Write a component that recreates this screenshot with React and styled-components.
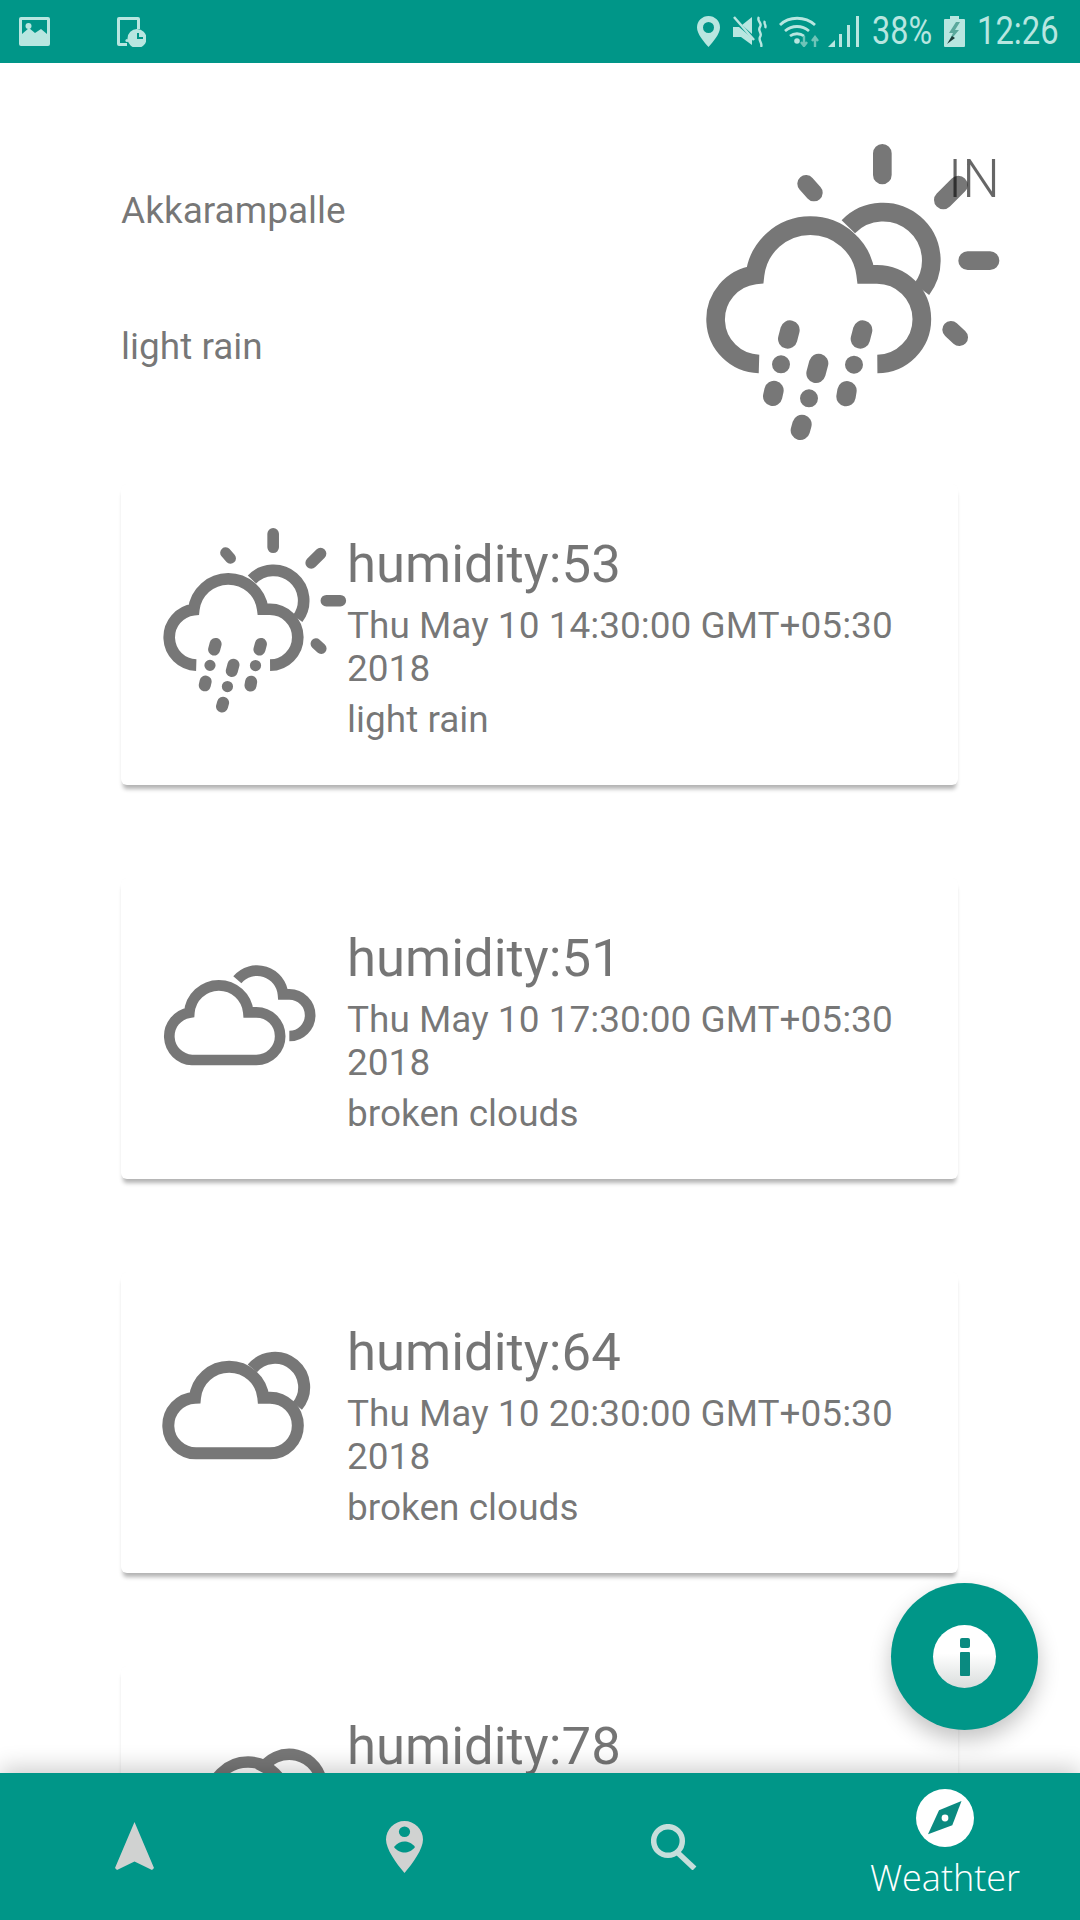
import React from "react";
import styled, { createGlobalStyle } from "styled-components";

const Global = createGlobalStyle`
  html, body { margin: 0; padding: 0; background: #fff; }
  body { font-family: Roboto, "Liberation Sans", sans-serif; }
  * { box-sizing: border-box; }
`;

const Screen = styled.div`
  position: relative;
  width: 1080px;
  height: 1920px;
  display: flex;
  flex-direction: column;
  overflow: hidden;
  background: #fff;
`;

const StatusBar = styled.div`
  height: 63px;
  flex: none;
  background: #009688;
  color: #b8e6e0;
  display: flex;
  align-items: center;
  justify-content: space-between;
  padding: 0 22px 0 19px;
`;

const StatusGroup = styled.div`
  display: flex;
  align-items: center;
  gap: ${(p) => p.$gap}px;
`;

const StatusGlyph = styled.svg`
  display: block;
  flex: none;
  fill: currentColor;
  margin-right: ${(p) => p.$mr || 0}px;
`;

const StatusText = styled.span`
  display: block;
  width: ${(p) => p.$w}px;
  font-size: 39px;
  line-height: 63px;
  white-space: nowrap;
  transform: scaleX(${(p) => p.$sx});
  transform-origin: left center;
`;

const Body = styled.main`
  flex: 1;
  min-height: 0;
  overflow: hidden;
  padding: 57px 122px 0 121px;
`;

const Header = styled.header`
  position: relative;
  height: 340px;
  margin-right: -62px;
  margin-bottom: 24px;
  display: flex;
  justify-content: space-between;
`;

const HeaderText = styled.div`
  display: flex;
  flex-direction: column;
  gap: 94px;
  padding-top: 70px;
  font-size: 37px;
  line-height: 42px;
  color: rgba(0, 0, 0, 0.54);
`;

const Country = styled.div`
  position: absolute;
  left: 827px;
  top: 28px;
  font-size: 53px;
  line-height: 62px;
  font-weight: 300;
  color: rgba(0, 0, 0, 0.6);
`;

const HeaderIcon = styled.div`
  width: 340px;
  height: 340px;
`;

const CardList = styled.div`
  display: flex;
  flex-direction: column;
  gap: 93px;
`;

const Card = styled.article`
  flex: none;
  height: 301px;
  display: flex;
  background: #fff;
  border-radius: 6px;
  padding: 29px 0 0 26px;
  box-shadow: 0 6px 4px -2px rgba(0, 0, 0, 0.3), 0 0 1px rgba(0, 0, 0, 0.02);
`;

const IconSlot = styled.div`
  flex: none;
  width: 200px;
  height: 212px;
`;

const WeatherSvg = styled.svg`
  display: block;
  width: ${(p) => p.$size}px;
  height: ${(p) => p.$size}px;
  overflow: visible;
  opacity: 0.53;
  fill: none;
  stroke: #000;
`;

const CardText = styled.div`
  flex: 1;
  min-width: 0;
  margin-top: 21px;
  color: rgba(0, 0, 0, 0.54);
`;

const Humidity = styled.div`
  font-size: 52.7px;
  line-height: 60px;
  margin-bottom: 10px;
`;

const DateLine = styled.div`
  font-size: 37px;
  line-height: 43px;
`;

const Description = styled.div`
  font-size: 37px;
  line-height: 43px;
  margin-top: 8px;
`;

const BottomNav = styled.nav`
  position: relative;
  z-index: 2;
  flex: none;
  height: 147px;
  background: #009688;
  display: grid;
  grid-template-columns: repeat(4, 1fr);
  box-shadow: 0 -5px 22px rgba(0, 0, 0, 0.2);
`;

const NavItem = styled.div`
  display: flex;
  flex-direction: column;
  align-items: center;
  justify-content: ${(p) => (p.$active ? "flex-start" : "center")};
  padding-top: ${(p) => (p.$active ? "16px" : "0")};
  padding-right: ${(p) => (p.$active ? "0" : "2px")};
`;

const NavLabel = styled.span`
  font-family: "Open Sans", sans-serif;
  font-weight: 300;
  font-size: 36px;
  line-height: 44px;
  margin-top: 9px;
  color: #fff;
`;

const Fab = styled.button`
  position: absolute;
  z-index: 3;
  right: 42px;
  bottom: 190px;
  width: 147px;
  height: 147px;
  padding: 0;
  border: 0;
  border-radius: 50%;
  background: #009688;
  display: flex;
  align-items: center;
  justify-content: center;
  box-shadow: 0 10px 22px rgba(0, 0, 0, 0.24);
`;

const FabDisc = styled.div`
  width: 63px;
  height: 63px;
  border-radius: 50%;
  background: linear-gradient(#ffffff 45%, #d9dddc);
  display: flex;
  flex-direction: column;
  align-items: center;
  padding-top: 13px;
  gap: 4px;
`;

const InfoDot = styled.span`
  width: 10px;
  height: 10px;
  border-radius: 2px;
  background: #0a8a80;
`;

const InfoStem = styled.span`
  width: 10px;
  height: 24px;
  border-radius: 1px;
  background: #0a8a80;
`;

const RainSun = ({ size }) => (
  <WeatherSvg $size={size} viewBox="0 0 1020 1020" strokeLinecap="round">
    <path strokeWidth="56" strokeLinecap="butt" d="M237 732A134 134 0 0 1 225 465A167.2 167.2 0 0 1 557 463H590A134 134 0 0 1 592 732" />
    <path strokeWidth="56" strokeLinecap="butt" d="M505 320A145 145 0 0 1 725 508" />
    <path strokeWidth="56" d="M607 100V165M863 422H930M790 240L835 195" />
    <path strokeWidth="52" d="M378 191L402 218M813 629L838 652" />
    <path strokeWidth="58" d="M330 630L323 657M548 630L541 657M416 730L408 760M282 811L278 829M501 812L498 830M366 913L361 931" />
    <path strokeWidth="54" d="M303 733h.01M522 734h.01M387 835h.01" />
  </WeatherSvg>
);

const BrokenClouds = () => (
  <WeatherSvg $size={212} viewBox="81 -69 636 636">
    <path strokeWidth="32" d="M216 390A71.5 71.5 0 0 1 208 248A88.8 88.8 0 0 1 385 247H409A71.5 71.5 0 0 1 409 390Z" />
    <path strokeWidth="32" d="M352 149A78 78 0 0 1 489 193H508A62.5 62.5 0 0 1 508 318" />
  </WeatherSvg>
);

const CloudSun = () => (
  <WeatherSvg $size={212} viewBox="81 -87 636 636">
    <path strokeWidth="36" d="M232 370A83.5 83.5 0 0 1 225 203A103 103 0 0 1 430 203H450A83.5 83.5 0 0 1 450 370Z" />
    <path strokeWidth="36" d="M397 115A88 88 0 0 1 532 228" />
  </WeatherSvg>
);

const CutCloud = () => (
  <WeatherSvg $size={212} viewBox="-129 -15 636 636">
    <path strokeWidth="34" d="M60 300A114 114 0 0 1 288 300" />
    <path strokeWidth="34" d="M212 215A97 97 0 0 1 395 259" />
  </WeatherSvg>
);

const forecasts = [
  { humidity: 53, date: "Thu May 10 14:30:00 GMT+05:30 2018", text: "light rain", Icon: () => <RainSun size={212} /> },
  { humidity: 51, date: "Thu May 10 17:30:00 GMT+05:30 2018", text: "broken clouds", Icon: BrokenClouds },
  { humidity: 64, date: "Thu May 10 20:30:00 GMT+05:30 2018", text: "broken clouds", Icon: CloudSun },
  { humidity: 78, Icon: CutCloud },
];

const ImageGlyph = () => (
  <StatusGlyph width="31" height="29" viewBox="0 0 31 29">
    <path fillRule="evenodd" d="M2 0H29A2 2 0 0 1 31 2V27A2 2 0 0 1 29 29H2A2 2 0 0 1 0 27V2A2 2 0 0 1 2 0ZM3 3V17L10 11L16 16L22 12L28 17V3Z" />
    <circle cx="9.5" cy="9" r="3" />
  </StatusGlyph>
);

const TabletGlyph = () => (
  <StatusGlyph width="29" height="30" viewBox="0 0 29 30">
    <path fillRule="evenodd" d="M2 0H21A2 2 0 0 1 23 2V12H20V3H3V26H10V29H2A2 2 0 0 1 0 27V2A2 2 0 0 1 2 0Z" />
    <circle cx="10" cy="23.5" r="1.6" />
    <path fillRule="evenodd" d="M20 12A9.5 9.5 0 1 1 20 31A9.5 9.5 0 0 1 20 12ZM20 16V22H26V20H22V16Z" />
  </StatusGlyph>
);

const PinGlyph = () => (
  <StatusGlyph width="23" height="31" viewBox="0 0 23 31">
    <path fillRule="evenodd" d="M11.5 0A11.5 11.5 0 0 1 23 11.5C23 18 16 26 11.5 31C7 26 0 18 0 11.5A11.5 11.5 0 0 1 11.5 0ZM11.5 6A5.5 5.5 0 1 0 11.5 17A5.5 5.5 0 0 0 11.5 6Z" />
  </StatusGlyph>
);

const MuteGlyph = () => (
  <StatusGlyph width="35" height="31" viewBox="0 0 35 31">
    <path d="M1 11H7L20 22L20 29L9 21H1Z" />
    <path d="M10 9L20 1V18Z" />
    <path d="M2 1L22 24" fill="none" stroke="currentColor" strokeWidth="2.5" />
    <path d="M27 1C24 5 31 7 28 11C25 15 31 17 28 21C26 25 31 27 29 31M33 5C31 8 35 9 33 12" fill="none" stroke="currentColor" strokeWidth="2.4" />
  </StatusGlyph>
);

const WifiGlyph = () => (
  <StatusGlyph $mr={-5} width="42" height="31" viewBox="0 0 42 31">
    <path d="M1 9C10 0 26 0 36 9M6 15C13 9 23 9 30 15M11 20C15 17 21 17 25 20" fill="none" stroke="currentColor" strokeWidth="2.8" />
    <circle cx="18" cy="25" r="2.8" />
    <path d="M25 20V29M22 26L25 30L28 26" fill="none" stroke="#6fc4b8" strokeWidth="2.4" />
    <path d="M36 31V21M33 25L36 21L39 25" fill="none" stroke="#6fc4b8" strokeWidth="2.4" />
  </StatusGlyph>
);

const SignalGlyph = () => (
  <StatusGlyph width="32" height="31" viewBox="0 0 32 31">
    <path d="M0 31L7 24V31Z" />
    <rect x="11" y="18" width="3" height="13" />
    <rect x="19" y="9" width="3" height="22" />
    <rect x="28" y="0" width="3" height="31" />
  </StatusGlyph>
);

const BatteryGlyph = () => (
  <StatusGlyph width="21" height="31" viewBox="0 0 21 31">
    <path fillRule="evenodd" d="M6 0H15V3H20A1 1 0 0 1 21 4V30A1 1 0 0 1 20 31H1A1 1 0 0 1 0 30V4A1 1 0 0 1 1 3H6Z" />
    <path d="M12 6L5 17H9L4 27L15 14H11L16 6Z" fill="#5aa89c" />
    <path d="M8 20L3 28L11 22Z" fill="#1d3b38" />
  </StatusGlyph>
);

const ArrowGlyph = () => (
  <svg width="39" height="49" viewBox="0 0 39 49" style={{ display: "block" }}>
    <path d="M19.5 0L39 46L37 48L19.5 39.5L2 48L0 46Z" fill="#d0d2d1" />
  </svg>
);

const PersonPinGlyph = () => (
  <svg width="37" height="52" viewBox="0 0 37 52" style={{ display: "block" }}>
    <path d="M18.5 0A18.5 18.5 0 0 1 37 18.5C37 28 27 42 18.5 52C10 42 0 28 0 18.5A18.5 18.5 0 0 1 18.5 0Z" fill="#d0d2d1" />
    <ellipse cx="18.5" cy="10.7" rx="5.6" ry="5.2" fill="#009688" />
    <path d="M8 26C11 22 15 20.5 18.5 20.5C22 20.5 26 22 29 26C26 30 22 31.5 18.5 31.5C15 31.5 11 30 8 26Z" fill="#009688" />
  </svg>
);

const SearchGlyph = () => (
  <svg width="46" height="46" viewBox="0 0 46 46" style={{ display: "block" }} fill="none" stroke="#c6dedb" strokeWidth="5.5">
    <circle cx="17" cy="17" r="14.3" />
    <path d="M27 29L43.5 44.5" />
  </svg>
);

const CompassGlyph = () => (
  <svg width="58" height="58" viewBox="-29 -29 58 58" style={{ display: "block" }}>
    <circle r="29" fill="#fff" />
    <path d="M16.5 -17L7.3 7.3L-17 16.3L-6 -7.7Z" fill="#0a8a80" />
    <circle r="3.4" fill="#fff" />
  </svg>
);

export default function App() {
  return (
    <Screen>
      <Global />
      <StatusBar>
        <StatusGroup $gap={67}>
          <ImageGlyph />
          <TabletGlyph />
        </StatusGroup>
        <StatusGroup $gap={12}>
          <PinGlyph />
          <MuteGlyph />
          <WifiGlyph />
          <SignalGlyph />
          <StatusText $w={60} $sx={0.83}>38%</StatusText>
          <BatteryGlyph />
          <StatusText $w={81} $sx={0.84}>12:26</StatusText>
        </StatusGroup>
      </StatusBar>

      <Body>
        <Header>
          <HeaderText>
            <div>Akkarampalle</div>
            <div>light rain</div>
          </HeaderText>
          <HeaderIcon>
            <RainSun size={340} />
          </HeaderIcon>
          <Country>IN</Country>
        </Header>
        <CardList>
          {forecasts.map(({ humidity, date, text, Icon }) => (
            <Card key={humidity}>
              <IconSlot>
                <Icon />
              </IconSlot>
              <CardText>
                <Humidity>humidity:{humidity}</Humidity>
                {date && <DateLine>{date}</DateLine>}
                {text && <Description>{text}</Description>}
              </CardText>
            </Card>
          ))}
        </CardList>
      </Body>

      <Fab aria-label="info">
        <FabDisc>
          <InfoDot />
          <InfoStem />
        </FabDisc>
      </Fab>

      <BottomNav>
        <NavItem><ArrowGlyph /></NavItem>
        <NavItem><PersonPinGlyph /></NavItem>
        <NavItem><SearchGlyph /></NavItem>
        <NavItem $active>
          <CompassGlyph />
          <NavLabel>Weathter</NavLabel>
        </NavItem>
      </BottomNav>
    </Screen>
  );
}
